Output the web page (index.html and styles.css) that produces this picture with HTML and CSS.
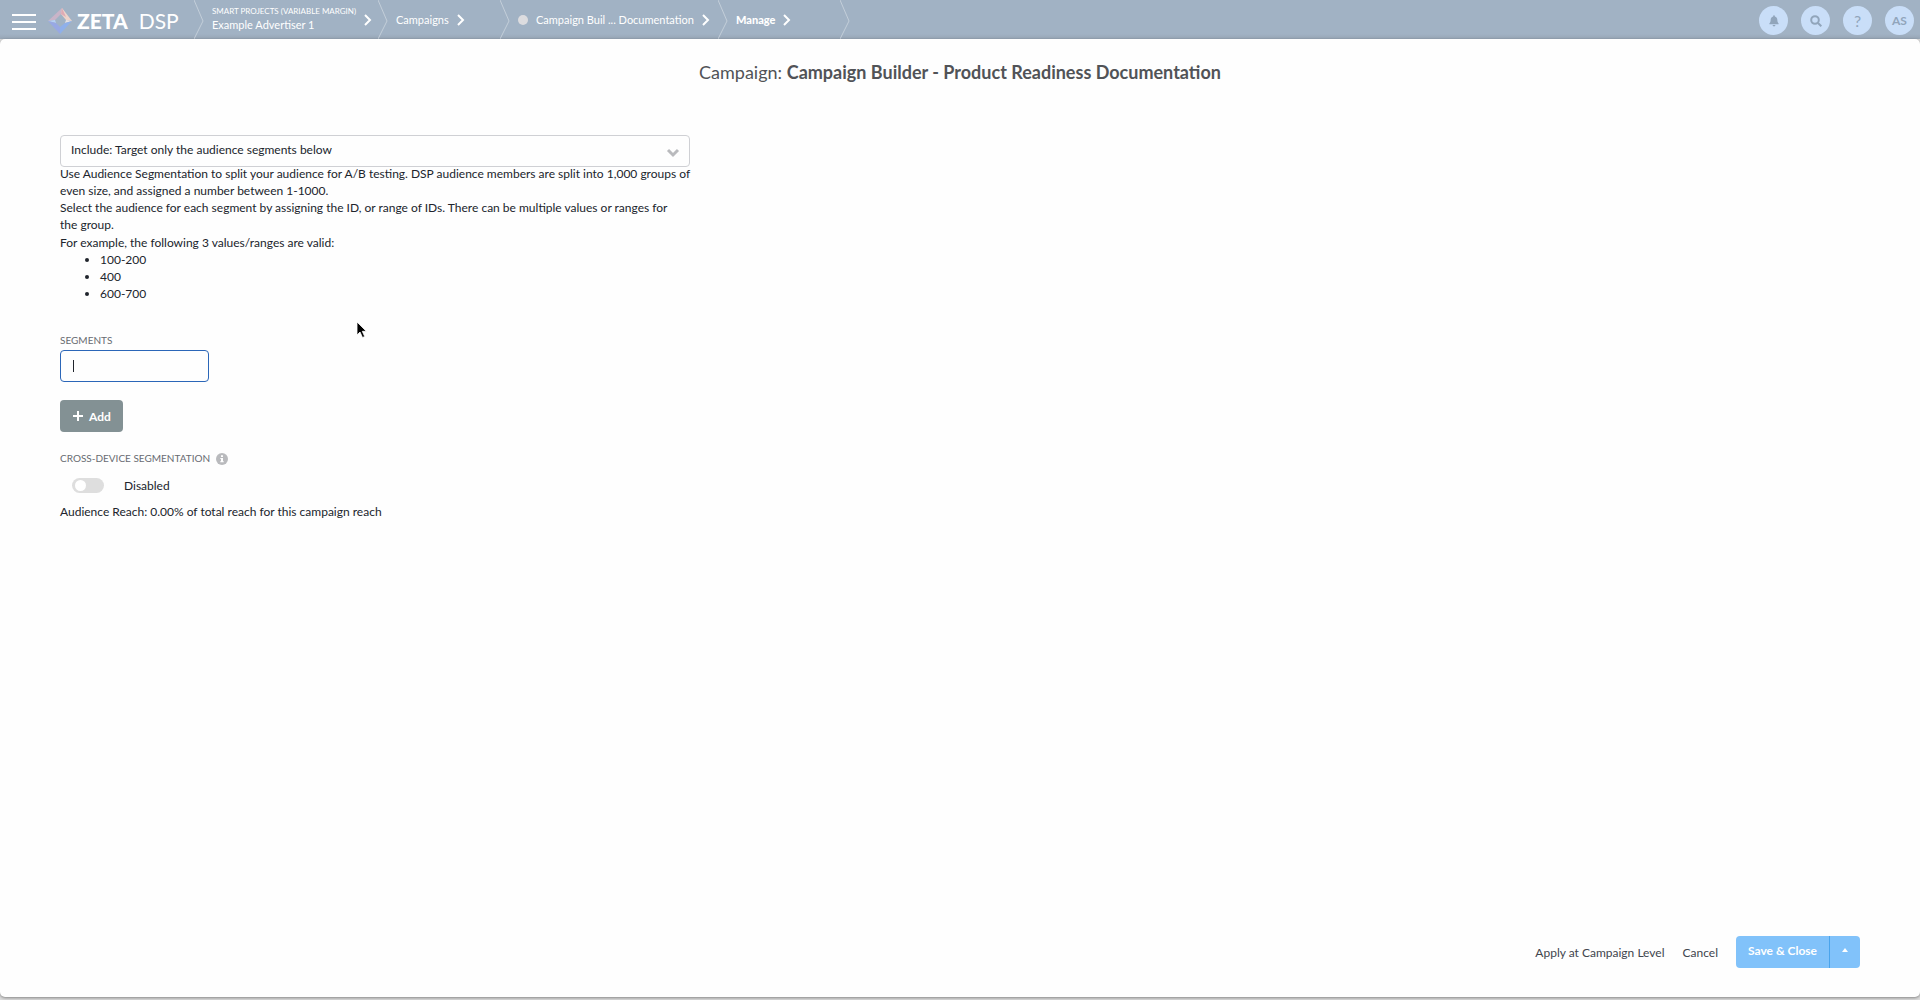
FILE: index.html
```html
<!DOCTYPE html>
<html lang="en">
<head>
    <meta charset="UTF-8">
    <meta name="viewport" content="width=device-width, initial-scale=1.0">
    <title>Zeta DSP - Campaign Builder</title>
    <link rel="stylesheet" href="styles.css">
</head>
<body>
    <!-- Top Bar -->
    <header class="topbar">
        <button type="button" class="menu-btn" aria-label="Menu"><span></span><span></span><span></span></button>
        <a href="#" class="logo">
            <svg width="24" height="26" viewBox="0 0 24 26" aria-hidden="true">
                <path d="M14 0 0 13 7 12 13 6z" fill="#c9b4c8"/>
                <path d="M14 0 24 13 18 12 13 6z" fill="#eed3ca"/>
                <path d="M13 6 14 0 18 9z" fill="#dfaab4"/>
                <path d="M18 12 24 13 17 15z" fill="#e6e2e4"/>
                <path d="M0 13 7 12 8 15z" fill="#b6d0f4"/>
                <path d="M0 13 8 15 12 19 12 26z" fill="#98a8e4"/>
                <path d="M24 13 17 15 12 19 12 26z" fill="#8fb0ea"/>
            </svg>
            <span class="logo-zeta">ZETA</span>
            <span class="logo-dsp">DSP</span>
        </a>
        <nav class="crumbs" aria-label="Breadcrumb">
            <div class="crumb crumb-advertiser">
                <svg class="divider" width="10" height="39" viewBox="0 0 10 39"><path d="M0 0 9 21 0 39"/></svg>
                <a href="#"><small>SMART PROJECTS (VARIABLE MARGIN)</small>Example Advertiser 1</a>
                <svg class="arrow" width="8" height="12" viewBox="0 0 8 12"><path d="M1 1 6 6 1 11"/></svg>
            </div>
            <div class="crumb">
                <svg class="divider" width="10" height="39" viewBox="0 0 10 39"><path d="M0 0 9 21 0 39"/></svg>
                <a href="#">Campaigns</a>
                <svg class="arrow" width="8" height="12" viewBox="0 0 8 12"><path d="M1 1 6 6 1 11"/></svg>
            </div>
            <div class="crumb crumb-campaign">
                <svg class="divider" width="10" height="39" viewBox="0 0 10 39"><path d="M0 0 9 21 0 39"/></svg>
                <span class="status"></span>
                <a href="#">Campaign Buil ... Documentation</a>
                <svg class="arrow" width="8" height="12" viewBox="0 0 8 12"><path d="M1 1 6 6 1 11"/></svg>
            </div>
            <div class="crumb">
                <svg class="divider" width="10" height="39" viewBox="0 0 10 39"><path d="M0 0 9 21 0 39"/></svg>
                <a href="#" class="current">Manage</a>
                <svg class="arrow" width="8" height="12" viewBox="0 0 8 12"><path d="M1 1 6 6 1 11"/></svg>
            </div>
            <svg class="divider" width="10" height="39" viewBox="0 0 10 39"><path d="M0 0 9 21 0 39"/></svg>
        </nav>
        <div class="tools">
            <button type="button" aria-label="Notifications">
                <svg width="10" height="12" viewBox="0 0 12 14"><path fill="currentColor" d="M6 0a1 1 0 0 1 1 1v.5C9 2 10 3.600 10 5.500 10 8 10.600 9 11.500 10c.4.500.1 1-.5 1H1c-.6 0-.9-.5-.5-1C1.400 9 2 8 2 5.500 2 3.600 3 2 5 1.500V1a1 1 0 0 1 1-1zM4.300 11.800h3.400a1.700 1.700 0 0 1-3.400 0z"/></svg>
            </button>
            <button type="button" aria-label="Search">
                <svg width="12" height="12" viewBox="0 0 12 12" fill="none" stroke="currentColor" stroke-width="2"><circle cx="5" cy="5" r="3.800"/><path d="M8 8l3.300 3.300"/></svg>
            </button>
            <button type="button" class="help" aria-label="Help">?</button>
            <button type="button" class="user">AS</button>
        </div>
    </header>

    <!-- Campaign Dialog -->
    <main class="dialog">
        <h1>Campaign: <b>Campaign Builder - Product Readiness Documentation</b></h1>

        <form class="content">
            <div class="select-box">
                <select aria-label="Audience targeting">
                    <option>Include: Target only the audience segments below</option>
                </select>
                <svg width="14" height="10" viewBox="0 0 14 10" aria-hidden="true"><path d="M2 2 7 7 12 2"/></svg>
            </div>
            <p>Use Audience Segmentation to split your audience for A/B testing. DSP audience members are split into 1,000 groups of even size, and assigned a number between 1-1000.</p>
            <p>Select the audience for each segment by assigning the ID, or range of IDs. There can be multiple values or ranges for the&nbsp;group.</p>
            <p class="example">For example, the following 3 values/ranges are valid:</p>
            <ul>
                <li>100-200</li>
                <li>400</li>
                <li>600-700</li>
            </ul>

            <label class="caption" for="segments">SEGMENTS</label>
            <input type="text" id="segments" class="segments">

            <button type="button" class="add-btn">
                <svg width="12" height="12" viewBox="0 0 12 12" aria-hidden="true"><path d="M6 1v10M1 6h10"/></svg>
                Add
            </button>

            <label class="caption" for="crossDevice">CROSS-DEVICE SEGMENTATION
                <svg width="12" height="12" viewBox="0 0 12 12" aria-hidden="true"><circle cx="6" cy="6" r="6" fill="#b9babd"/><path d="M5 2.300h2v1.600H5zM4.300 4.900H7v3.400h.8v1H4.200v-1H5V5.900h-.7z" fill="#fff"/></svg>
            </label>
            <div class="toggle-row">
                <input type="checkbox" id="crossDevice" class="toggle">
                <span>Disabled</span>
            </div>
            <p>Audience Reach: 0.00% of total reach for this campaign reach</p>
        </form>

        <footer class="actions">
            <button type="button" class="text-btn">Apply at Campaign Level</button>
            <button type="button" class="text-btn">Cancel</button>
            <div class="split-btn">
                <button type="button" class="save">Save &amp; Close</button>
                <button type="button" class="more" aria-label="More save options">
                    <svg width="6" height="4" viewBox="0 0 6 4"><path d="M3 0 6 4H0z" fill="#fff"/></svg>
                </button>
            </div>
        </footer>
    </main>

    <!-- Mouse pointer -->
    <svg class="pointer" width="12" height="18" viewBox="0 0 12 18" aria-hidden="true"><path d="M1 1v13l3-3 2.500 5.500 2.200-1L6.300 10.300h4z" fill="#000" stroke="#fff" stroke-width=".8"/></svg>
</body>
</html>
```
FILE: styles.css
```css
/* General Styling */
* {
    box-sizing: border-box;
}

body {
    font-family: Lato, "Open Sans", sans-serif;
    font-size: 12px;
    line-height: 17px;
    color: #20242c;
    margin: 0;
    padding-bottom: 3px;
    background: #dcdcdc;
    display: flex;
    flex-direction: column;
    min-height: 100vh;
}

button,
input,
select {
    font: inherit;
    color: inherit;
    margin: 0;
}

button {
    border: none;
    background: none;
    padding: 0;
    cursor: pointer;
}

svg {
    flex: none;
}

/* Top Bar */
.topbar {
    display: flex;
    align-items: center;
    height: 39px;
    padding: 0 6px 0 12px;
    background: linear-gradient(#a1b2c4 34px, #97a5b5);
    color: white;
}

.topbar a {
    color: white;
    text-decoration: none;
}

.menu-btn {
    display: flex;
    flex-direction: column;
    gap: 5px;
    width: 24px;
    padding-top: 4px;
}

.menu-btn span {
    height: 2px;
    background: white;
}

.logo {
    display: flex;
    align-items: center;
    width: 158px;
    padding: 2px 0 0 12px;
    font-size: 21px;
    line-height: 24px;
}

.logo-zeta {
    font-weight: 900;
    margin: 0 11px 0 5px;
}

/* Breadcrumbs */
.crumbs {
    display: flex;
    flex: 1;
    font-size: 11px;
    line-height: 14px;
}

.crumb {
    display: flex;
    align-items: center;
    gap: 8px;
    min-width: 122px;
}

.crumb-advertiser {
    min-width: 184px;
}

.crumb-advertiser a {
    padding-bottom: 3px;
}

.crumb-campaign {
    min-width: 218px;
}

.crumb small {
    display: block;
    font-size: 8px;
}

.divider {
    fill: none;
    stroke: #c3ced9;
}

.arrow {
    fill: none;
    stroke: white;
    stroke-width: 2;
}

.status {
    width: 10px;
    height: 10px;
    border-radius: 50%;
    background: #dcdcdf;
}

.current {
    font-weight: 900;
}

/* Round buttons on the right */
.tools {
    display: flex;
    gap: 13px;
    padding-top: 2px;
}

.tools button {
    display: flex;
    align-items: center;
    justify-content: center;
    width: 29px;
    height: 29px;
    border-radius: 50%;
    background: #c9def8;
    color: #91a5bb;
}

.tools .help {
    font-size: 16px;
}

.tools .user {
    font-weight: bold;
}

/* Dialog */
.dialog {
    flex: 1;
    display: flex;
    flex-direction: column;
    padding: 22px 60px 29px;
    background: #fefefe;
    border-radius: 5px;
    box-shadow: 0 1px 3px rgba(0, 0, 0, 0.4);
}

.dialog h1 {
    margin: 0 0 52px;
    font-size: 18px;
    line-height: 22px;
    font-weight: normal;
    text-align: center;
    color: #515357;
}

.content {
    flex: 1;
    width: 35%;
}

.content p {
    margin: 0;
}

.content .example {
    margin-top: 1px;
}

.content ul {
    margin: 0 0 30px;
    padding-left: 40px;
}

.select-box {
    position: relative;
    margin-bottom: -2px;
}

.select-box select {
    display: block;
    width: 100%;
    height: 32px;
    padding: 0 40px 4px 10px;
    border: 1px solid #cfd0d4;
    border-radius: 4px;
    background: transparent;
    appearance: none;
}

.select-box svg {
    position: absolute;
    top: 13px;
    right: 10px;
    fill: none;
    stroke: #b9babd;
    stroke-width: 3;
}

.caption {
    display: flex;
    align-items: center;
    gap: 6px;
    font-size: 10px;
    color: #686b71;
}

/* Segment input, shown with its caret */
.segments {
    display: block;
    width: 149px;
    height: 32px;
    margin: 1px 0 18px;
    padding: 0 12px;
    border: 1px solid #2b66b8;
    border-radius: 4px;
    outline: none;
    background: linear-gradient(#20242c, #20242c) 12px center / 1px 12px no-repeat;
}

.add-btn {
    display: flex;
    align-items: center;
    gap: 5px;
    height: 32px;
    margin-bottom: 18px;
    padding: 0 12px;
    border-radius: 4px;
    background: #839194;
    color: white;
    font-weight: bold;
}

.add-btn path {
    stroke: white;
    stroke-width: 2;
}

/* Toggle */
.toggle-row {
    display: flex;
    align-items: center;
    gap: 20px;
    margin: 10px 0 9px;
    padding-left: 12px;
}

.toggle {
    display: flex;
    width: 32px;
    height: 15px;
    padding: 2px 3px;
    border-radius: 8px;
    background: #dedede;
    appearance: none;
}

.toggle::before {
    content: "";
    width: 11px;
    height: 11px;
    border-radius: 50%;
    background: white;
}

.toggle:checked {
    justify-content: flex-end;
    background: #2b66b8;
}

/* Footer Buttons */
.actions {
    display: flex;
    justify-content: flex-end;
    align-items: center;
    gap: 18px;
}

.text-btn {
    color: #41454d;
}

.split-btn {
    display: flex;
    height: 32px;
    border-radius: 4px;
    background: #81c2fa;
    color: white;
}

.save {
    padding: 0 12px 4px;
    font-weight: bold;
}

.more {
    display: flex;
    justify-content: center;
    width: 31px;
    padding-top: 12px;
    border-left: 1px solid #4aa4ec;
}

/* Pointer lies over the page */
.pointer {
    position: absolute;
    left: 356px;
    top: 321px;
}
```
